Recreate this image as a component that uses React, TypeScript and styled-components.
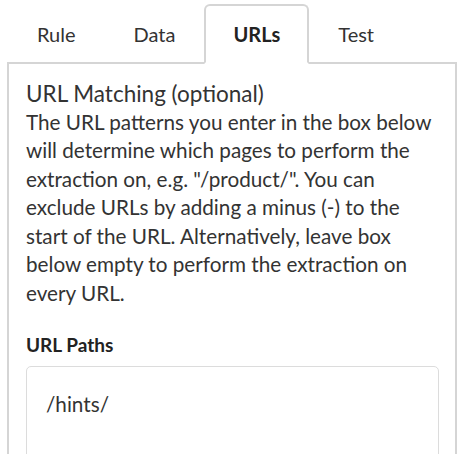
import React from 'react';
import styled, { createGlobalStyle } from 'styled-components';

const TABS = ['Rule', 'Data', 'URLs', 'Test'];
const ACTIVE = 'URLs';

const GlobalStyle = createGlobalStyle`
  body {
    margin: 0;
    background: #fff;
    font-family: Lato, "Open Sans", sans-serif;
    color: #333;
  }
`;

const Wrapper = styled.div`
  padding: 4px 6px 0 7px;
  height: 454px;
  overflow: hidden;
  box-sizing: border-box;
`;

const TabList = styled.ul`
  margin: 0;
  padding: 0 0 0 1px;
  list-style: none;
  display: flex;
  position: relative;
  z-index: 1;
`;

const Tab = styled.li<{ $active?: boolean }>`
  padding: 14px 27px 13.4px;
  margin-bottom: -2px;
  font-size: 20px;
  line-height: 28.6px;
  font-weight: ${(p) => (p.$active ? 700 : 400)};
  color: ${(p) => (p.$active ? '#222' : '#333')};
  border: 2px solid ${(p) => (p.$active ? '#d5d5d5' : 'transparent')};
  border-bottom-color: ${(p) => (p.$active ? '#fff' : 'transparent')};
  border-radius: 6px 6px 0 0;
  background: ${(p) => (p.$active ? '#fff' : 'transparent')};
`;

const Panel = styled.section`
  border: 2px solid #d5d5d5;
  padding: 15px 17px 0;
  height: 420px;
  box-sizing: border-box;
`;

const Heading = styled.h3`
  margin: 0;
  font-size: 22.5px;
  line-height: 29px;
  font-weight: 400;
  color: #333;
`;

const Description = styled.p`
  margin: 0;
  font-size: 20.7px;
  line-height: 28.5px;
  color: #333;
`;

const FieldLabel = styled.label`
  display: block;
  margin-top: 24px;
  font-size: 19px;
  line-height: 27px;
  font-weight: 700;
  color: #222;
`;

const PathsBox = styled.textarea`
  display: block;
  margin-top: 8px;
  width: 413px;
  height: 120px;
  box-sizing: border-box;
  padding: 23px 19px;
  border: 1.5px solid #dcdcdc;
  border-radius: 5px;
  font-family: Lato, "Open Sans", sans-serif;
  font-size: 20.7px;
  line-height: 28.5px;
  color: #333;
  resize: none;
  outline: none;
`;

export default function App() {
  return (
    <Wrapper>
      <GlobalStyle />
      <TabList>
        {TABS.map((tab) => (
          <Tab key={tab} $active={tab === ACTIVE}>
            {tab}
          </Tab>
        ))}
      </TabList>
      <Panel>
        <Heading>URL Matching (optional)</Heading>
        <Description>
          The URL patterns you enter in the box below will determine which pages to perform the
          extraction on, e.g. "/product/". You can exclude URLs by adding a minus (-) to the start
          of the URL. Alternatively, leave box below empty to perform the extraction on every URL.
        </Description>
        <FieldLabel htmlFor="url-paths">URL Paths</FieldLabel>
        <PathsBox id="url-paths" defaultValue="/hints/" />
      </Panel>
    </Wrapper>
  );
}
